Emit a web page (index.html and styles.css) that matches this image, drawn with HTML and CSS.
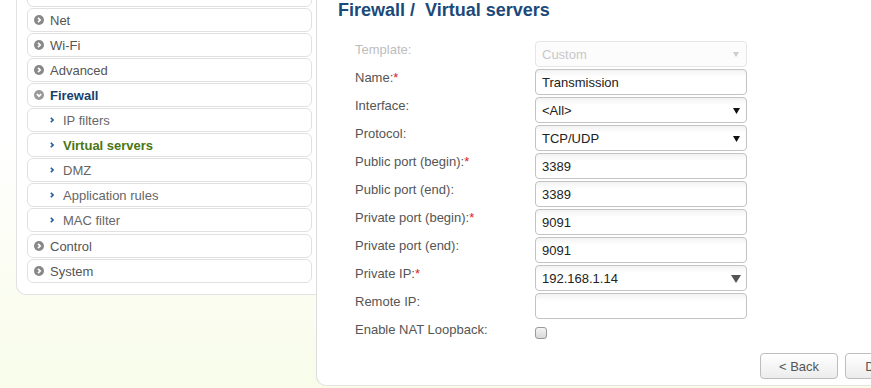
FILE: index.html
```html
<!DOCTYPE html>
<html lang="en">
<head>
  <meta charset="UTF-8">
  <title>Firewall / Virtual servers</title>
  <link rel="stylesheet" href="styles.css">
</head>
<body>
  <div class="page">
    <nav class="sidebar">
      <ul class="menu">
        <li class="item"></li>
        <li class="item"><svg class="ico" viewBox="0 0 10 10"><circle cx="5" cy="5" r="5" fill="#888"/><polyline points="4,2.8 6.2,5 4,7.2" fill="none" stroke="#fff" stroke-width="1.7"/></svg>Net</li>
        <li class="item"><svg class="ico" viewBox="0 0 10 10"><circle cx="5" cy="5" r="5" fill="#888"/><polyline points="4,2.8 6.2,5 4,7.2" fill="none" stroke="#fff" stroke-width="1.7"/></svg>Wi-Fi</li>
        <li class="item"><svg class="ico" viewBox="0 0 10 10"><circle cx="5" cy="5" r="5" fill="#888"/><polyline points="4,2.8 6.2,5 4,7.2" fill="none" stroke="#fff" stroke-width="1.7"/></svg>Advanced</li>
        <li class="item open"><svg class="ico" viewBox="0 0 10 10"><circle cx="5" cy="5" r="5" fill="#999"/><polyline points="2.8,4 5,6.2 7.2,4" fill="none" stroke="#fff" stroke-width="1.7"/></svg>Firewall</li>
        <li class="item sub"><svg class="chev" viewBox="0 0 4 6"><polyline points="0.8,0.8 3,3 0.8,5.2" fill="none" stroke="#1f5d9c" stroke-width="1.6"/></svg>IP filters</li>
        <li class="item sub active"><svg class="chev" viewBox="0 0 4 6"><polyline points="0.8,0.8 3,3 0.8,5.2" fill="none" stroke="#1f5d9c" stroke-width="1.6"/></svg>Virtual servers</li>
        <li class="item sub"><svg class="chev" viewBox="0 0 4 6"><polyline points="0.8,0.8 3,3 0.8,5.2" fill="none" stroke="#1f5d9c" stroke-width="1.6"/></svg>DMZ</li>
        <li class="item sub"><svg class="chev" viewBox="0 0 4 6"><polyline points="0.8,0.8 3,3 0.8,5.2" fill="none" stroke="#1f5d9c" stroke-width="1.6"/></svg>Application rules</li>
        <li class="item sub last"><svg class="chev" viewBox="0 0 4 6"><polyline points="0.8,0.8 3,3 0.8,5.2" fill="none" stroke="#1f5d9c" stroke-width="1.6"/></svg>MAC filter</li>
        <li class="item"><svg class="ico" viewBox="0 0 10 10"><circle cx="5" cy="5" r="5" fill="#888"/><polyline points="4,2.8 6.2,5 4,7.2" fill="none" stroke="#fff" stroke-width="1.7"/></svg>Control</li>
        <li class="item"><svg class="ico" viewBox="0 0 10 10"><circle cx="5" cy="5" r="5" fill="#888"/><polyline points="4,2.8 6.2,5 4,7.2" fill="none" stroke="#fff" stroke-width="1.7"/></svg>System</li>
      </ul>
    </nav>

    <main class="content">
      <h1 class="title">Firewall /&nbsp; Virtual servers</h1>

      <form class="form">
        <div class="row">
          <label class="label muted">Template:</label>
          <div class="select disabled"><span>Custom</span><svg class="arrow" viewBox="0 0 6 5"><polygon points="0,0 6,0 3,5" fill="#ccc"/></svg></div>
        </div>
        <div class="row">
          <label class="label">Name:<span class="req">*</span></label>
          <input class="field" type="text" value="Transmission">
        </div>
        <div class="row">
          <label class="label">Interface:</label>
          <div class="select"><span>&lt;All&gt;</span><svg class="arrow" viewBox="0 0 7 6"><polygon points="0,0 7,0 3.5,6" fill="#111"/></svg></div>
        </div>
        <div class="row">
          <label class="label">Protocol:</label>
          <div class="select"><span>TCP/UDP</span><svg class="arrow" viewBox="0 0 7 6"><polygon points="0,0 7,0 3.5,6" fill="#111"/></svg></div>
        </div>
        <div class="row">
          <label class="label">Public port (begin):<span class="req">*</span></label>
          <input class="field" type="text" value="3389">
        </div>
        <div class="row">
          <label class="label">Public port (end):</label>
          <input class="field" type="text" value="3389">
        </div>
        <div class="row">
          <label class="label">Private port (begin):<span class="req">*</span></label>
          <input class="field" type="text" value="9091">
        </div>
        <div class="row">
          <label class="label">Private port (end):</label>
          <input class="field" type="text" value="9091">
        </div>
        <div class="row">
          <label class="label">Private IP:<span class="req">*</span></label>
          <div class="select"><span>192.168.1.14</span><svg class="arrow big" viewBox="0 0 10 8"><polygon points="0,0 10,0 5,8" fill="#555"/></svg></div>
        </div>
        <div class="row">
          <label class="label">Remote IP:</label>
          <input class="field" type="text" value="">
        </div>
        <div class="row">
          <label class="label">Enable NAT Loopback:</label>
          <input class="check" type="checkbox">
        </div>
      </form>

      <div class="actions">
        <button class="btn">&lt; Back</button>
        <button class="btn">Delete</button>
      </div>
    </main>
  </div>
</body>
</html>
```

FILE: styles.css
```css
html, body {
  height: 100%;
}

body {
  margin: 0;
  overflow: hidden;
  font-family: "Liberation Sans", Arial, sans-serif;
  font-size: 13px;
  color: #555;
  background: linear-gradient(to bottom, #ffffff 0%, #ffffff 35%, #f8fce9 100%);
}

.page {
  display: flex;
  align-items: flex-start;
  padding-left: 16px;
}

/* left menu */
.sidebar {
  width: 285px;
  margin-top: -26px;
  padding: 8px 4px 10px 10px;
  border: 1px solid #e2e2e2;
  border-right: 0;
  border-radius: 0 0 0 10px;
  background: #fff;
}

.menu {
  list-style: none;
  margin: 0;
  padding: 0;
}

.item {
  display: flex;
  align-items: center;
  height: 22px;
  margin-bottom: 1px;
  padding-left: 6px;
  border: 1px solid #e1e1e1;
  border-radius: 6px;
  color: #555;
}

.item .ico {
  width: 10px;
  height: 10px;
  margin-right: 6px;
}

.item.open {
  font-weight: bold;
  color: #173f6b;
}

.item.sub {
  padding-left: 22px;
  color: #666;
}

.item.last {
  margin-bottom: 2px;
}

.item .chev {
  width: 4px;
  height: 6px;
  margin-right: 9px;
}

.item.active {
  font-weight: bold;
  color: #4a7612;
}

/* content */
.content {
  flex: 1;
  min-width: 0;
  padding: 0 0 6px 21px;
  border-left: 1px solid #dcdcdc;
  border-bottom: 1px solid #e4e4e4;
  border-radius: 0 0 0 10px;
  background: #fff;
}

.title {
  margin: 0 0 21px;
  font-size: 18px;
  line-height: 20px;
  font-weight: bold;
  color: #1b4a7a;
  white-space: nowrap;
}

.form {
  margin-left: 17px;
}

.row {
  display: flex;
  align-items: flex-start;
  height: 26px;
  margin-bottom: 2px;
}

.label {
  width: 180px;
  padding-top: 1px;
  line-height: 16px;
  color: #555;
}

.label.muted {
  color: #bdbdbd;
}

.req {
  color: #e02020;
}

.field,
.select {
  box-sizing: border-box;
  width: 212px;
  height: 26px;
  padding: 0 6px;
  border: 1px solid #c3c3c3;
  border-radius: 4px;
  background: linear-gradient(to bottom, #f2f2f2 0, #ffffff 7px);
  font-family: "Liberation Sans", Arial, sans-serif;
  font-size: 13px;
  color: #222;
  outline: none;
}

.select {
  position: relative;
  display: flex;
  align-items: center;
}

.select .arrow {
  position: absolute;
  right: 6px;
  top: 10px;
  width: 7px;
  height: 6px;
}

.select .arrow.big {
  right: 5px;
  top: 9px;
  width: 10px;
  height: 8px;
}

.select.disabled {
  border-color: #e6e6e6;
  background: #fcfcfc;
  color: #c8c8c8;
}

.select.disabled .arrow {
  width: 6px;
  height: 5px;
  top: 10px;
  right: 7px;
}

.check {
  appearance: none;
  box-sizing: border-box;
  width: 12px;
  height: 12px;
  margin: 6px 0 0;
  border: 1px solid #9a9a9a;
  border-radius: 3px;
  background: linear-gradient(to bottom, #f4f4f4, #d8d8d8);
}

.actions {
  display: flex;
  gap: 7px;
  margin: 6px 0 0 422px;
}

.btn {
  flex: none;
  width: 78px;
  height: 26px;
  border: 1px solid #bdbdbd;
  border-radius: 4px;
  background: linear-gradient(to bottom, #ffffff, #ececec);
  font-family: "Liberation Sans", Arial, sans-serif;
  font-size: 13px;
  color: #555;
  cursor: pointer;
}
```
